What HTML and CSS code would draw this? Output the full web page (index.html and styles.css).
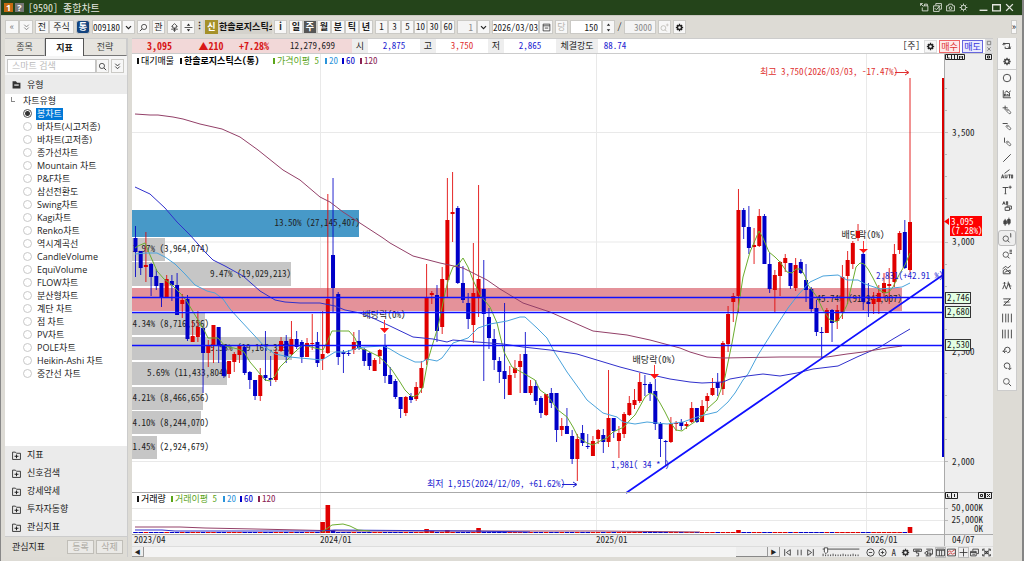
FILE: index.html
```html
<!DOCTYPE html>
<html lang="ko">
<head>
<meta charset="utf-8">
<title>[9590] 종합차트</title>
<link rel="stylesheet" href="styles.css">
</head>
<body>
<svg class="defs" aria-hidden="true">
  <symbol id="gear" viewBox="0 0 16 16"><path d="M8 1.5v13M1.5 8h13M3.4 3.4l9.2 9.2M12.6 3.4l-9.2 9.2" fill="none" stroke="currentColor" stroke-width="2.4"/><circle cx="8" cy="8" r="3.6" fill="#f7f7f7" stroke="currentColor" stroke-width="2.4"/></symbol>
  <symbol id="search" viewBox="0 0 16 16"><circle cx="7" cy="7" r="4.6" fill="none" stroke="currentColor" stroke-width="1.3"/><path d="M10.5 10.5l4 4" stroke="currentColor" stroke-width="1.5"/></symbol>
  <symbol id="search-mark" viewBox="0 0 16 16"><circle cx="6" cy="9" r="4.300" fill="none" stroke="currentColor" stroke-width="1.3"/><path d="M9 12l3 3" stroke="currentColor" stroke-width="1.5"/></symbol>
  <symbol id="down2" viewBox="0 0 16 16"><path d="M4 3l4 4 4-4M4 8l4 4 4-4" fill="none" stroke="currentColor" stroke-width="1.5"/></symbol>
  <symbol id="down" viewBox="0 0 16 16"><path d="M3.500 5.500l4.500 4.500 4.500-4.500" fill="none" stroke="currentColor" stroke-width="2"/></symbol>
  <symbol id="plusbox" viewBox="0 0 16 16"><path d="M1 2h5l2 2h7v11H1z" fill="none" stroke="currentColor" stroke-width="1.5"/><path d="M8 6v7M4.500 9.500h7" stroke="currentColor" stroke-width="1.8"/></symbol>
  <symbol id="pen" viewBox="0 0 16 16"><path d="M7 7.500l2-1 5 5-.5 2-2 .5-5-5zM8.500 9.500l2-2" fill="none" stroke="currentColor" stroke-width="1.200"/></symbol>
</svg>
<div class="window">
  <header class="title">
    <span class="badge orange">1</span><span class="badge gray">?</span>
    <h1>[9590] 종합차트</h1>
    <div class="wincontrols">
      <button aria-label="내보내기"><svg viewBox="0 0 16 16"><path d="M6 5h8v9H4V8M1 1l5 5M1 1h4M1 1v4M8 5V2h5v3" /></svg></button>
      <button aria-label="복사"><svg viewBox="0 0 16 16"><path d="M5 4V1h10v10h-3M1 5h10v10H1zM3 9l3 3 7-8"/></svg></button>
      <button aria-label="화면 캡처"><svg viewBox="0 0 16 16"><path d="M1 5h3l1-3h6l1 3h3v9H1z"/><circle cx="8" cy="9" r="2.500"/></svg></button>
      <button aria-label="환경설정"><svg viewBox="0 0 16 16"><circle cx="8" cy="8" r="4"/><path d="M8 1v3M8 12v3M1 8h3M12 8h3M3 3l2 2M11 11l2 2M13 3l-2 2M5 11l-2 2"/></svg></button>
      <button class="wide" aria-label="최소화"><svg viewBox="0 0 16 16"><path d="M1 13h14" class="thick"/></svg></button>
      <button aria-label="최대화"><svg viewBox="0 0 16 16"><path d="M1 3h14v11H1z" class="thick"/></svg></button>
      <button aria-label="닫기"><svg viewBox="0 0 16 16"><path d="M2 2l12 12M14 2L2 14" class="thick"/></svg></button>
    </div>
  </header>

  <div class="toolbar">
    <div class="group"><button class="b w14 gray-t">«</button><button class="b w14 gray-t" aria-label="아래로"><svg class="i"><use href="#down2"/></svg></button></div>
    <div class="group"><button class="b w14">전</button><button class="b w25">주식</button></div>
    <button class="b w14 unified">통</button>
    <div class="group"><input class="w30" aria-label="종목코드" value="009180"><button class="b" aria-label="종목 목록"><svg class="i"><use href="#down"/></svg></button></div>
    <button class="b" aria-label="종목 검색"><svg class="i flip"><use href="#search"/></svg></button>
    <button class="b">관</button>
    <div class="group"><button class="b w14" aria-label="순환"><svg class="i line" viewBox="0 0 16 16"><path d="M8 1L3 6h2v3h6V6h2zM2 11h12M8 9v6M6 13l2 2 2-2"/></svg></button><button class="b w14" aria-label="이동"><svg class="i" viewBox="0 0 16 16"><path d="M8 1l3 4H5zM8 15l3-4H5zM1 7h14v1.500H1z" fill="currentColor"/></svg></button><span class="dots">⋮</span></div>
    <div class="stock"><span class="new">신</span><strong>한솔로지스틱스</strong></div>
    <button class="b bold">i</button>
    <div class="group period"><button class="b w14">일</button><button class="b w14 on">주</button><button class="b w14">월</button><button class="b w14">분</button><button class="b w14">틱</button><button class="b w14">년</button></div>
    <div class="group"><button class="b">1</button><button class="b">3</button><button class="b">5</button><button class="b">10</button><button class="b w14">30</button><button class="b w14">60</button></div>
    <div class="group"><input class="w20 off" aria-label="주기" value="1"><button class="b" aria-label="주기 목록"><svg class="i"><use href="#down"/></svg></button></div>
    <div class="group"><input class="w47" aria-label="날짜" value="2026/03/03"><button class="b w14" aria-label="달력"><svg class="i line" viewBox="0 0 16 16"><path d="M2 2h12v12H2zM2 5h12M5 9h6"/></svg></button></div>
    <button class="b dim">당</button>
    <div class="group"><input class="w32" aria-label="표시 개수" value="150"><button class="b" aria-label="개수 조절"><svg class="i" viewBox="0 0 16 16"><path d="M8 1l3 4H5zM8 15l3-4H5z" fill="currentColor"/></svg></button></div>
    <span class="slash">/</span>
    <input class="w32 off" aria-label="전체 개수" value="3000">
    <button class="b dim" aria-label="확대"><svg class="i" viewBox="0 0 16 16"><use href="#search-mark"/><path d="M13 1v5M10.500 3.500h5" stroke="currentColor"/></svg></button>
    <button class="b" aria-label="차트 설정"><svg class="i"><use href="#gear"/></svg></button>
    <button class="b more" aria-label="더보기">»</button>
  </div>

  <div class="body">
    <aside class="side">
      <nav class="tabs"><button>종목</button><button class="on">지표</button><button>전략</button></nav>
      <div class="find"><input type="text" placeholder="스마트 검색" aria-label="스마트 검색"><button class="b" aria-label="검색"><svg class="i"><use href="#search"/></svg></button><button class="b gap" aria-label="펼치기"><svg class="i"><use href="#down2"/></svg></button></div>
      <h2><svg class="i" viewBox="0 0 16 16"><path d="M1 2h6l2 3h6v10H1z" fill="#333"/><path d="M4 9h8" stroke="#fff" stroke-width="2"/></svg>유형</h2>
      <fieldset class="tree">
        <legend>차트유형</legend>
        <label><input type="radio" name="t" checked><span>봉차트</span></label>
        <label><input type="radio" name="t"><span>바차트(시고저종)</span></label>
        <label><input type="radio" name="t"><span>바차트(고저종)</span></label>
        <label><input type="radio" name="t"><span>종가선차트</span></label>
        <label><input type="radio" name="t"><span>Mountain 차트</span></label>
        <label><input type="radio" name="t"><span>P&amp;F차트</span></label>
        <label><input type="radio" name="t"><span>삼선전환도</span></label>
        <label><input type="radio" name="t"><span>Swing차트</span></label>
        <label><input type="radio" name="t"><span>Kagi차트</span></label>
        <label><input type="radio" name="t"><span>Renko차트</span></label>
        <label><input type="radio" name="t"><span>역시계곡선</span></label>
        <label><input type="radio" name="t"><span>CandleVolume</span></label>
        <label><input type="radio" name="t"><span>EquiVolume</span></label>
        <label><input type="radio" name="t"><span>FLOW차트</span></label>
        <label><input type="radio" name="t"><span>분산형차트</span></label>
        <label><input type="radio" name="t"><span>계단 차트</span></label>
        <label><input type="radio" name="t"><span>점 차트</span></label>
        <label><input type="radio" name="t"><span>PV차트</span></label>
        <label><input type="radio" name="t"><span>POLE차트</span></label>
        <label><input type="radio" name="t"><span>Heikin-Ashi 차트</span></label>
        <label><input type="radio" name="t"><span>중간선 차트</span></label>
      </fieldset>
      <div class="folders">
        <button><svg class="i"><use href="#plusbox"/></svg>지표</button>
        <button><svg class="i"><use href="#plusbox"/></svg>신호검색</button>
        <button><svg class="i"><use href="#plusbox"/></svg>강세약세</button>
        <button><svg class="i"><use href="#plusbox"/></svg>투자자동향</button>
        <button><svg class="i"><use href="#plusbox"/></svg>관심지표</button>
      </div>
      <footer><span>관심지표</span><button disabled>등록</button><button disabled>삭제</button></footer>
    </aside>

    <main class="chart">
      <div class="quote">
        <div class="now"><b>3,095</b><b>▲210</b><b>+7.28%</b><span>12,279,699</span></div>
        <span class="k">시</span><span class="v">2,875</span>
        <span class="k">고</span><span class="v up">3,750</span>
        <span class="k">저</span><span class="v">2,865</span>
        <span class="k strength">체결강도</span><span class="v rate">88.74</span>
        <div class="orders"><span>[주]</span><button class="b" aria-label="주문 설정"><svg class="i"><use href="#gear"/></svg></button><button class="buy">매수</button><button class="sell">매도</button><button class="mini" aria-label="창 조절"><svg viewBox="0 0 6 14"><path d="M1 1.500h4v4H1zM1 8.500l4 4M5 8.500l-4 4" fill="none" stroke="#777"/></svg></button></div>
      </div>
      <svg class="plot" viewBox="132 54 861 492" role="img" aria-label="한솔로지스틱스 주봉 차트">
        <rect x="944" y="54" width="49" height="492" fill="#eee"/>
        <rect x="132" y="534" width="812" height="12" fill="#eee"/>
        <g class="grid"><path d="M132 132.500H944M132 242H944M132 351.500H944M132 461.500H944M320.500 54V534M596.500 54V534M866.500 54V534M132 508.500H944M132 520.500H944"/></g>
        <g id="profile"></g>
        <g class="num" text-anchor="end">
          <text x="360" y="226">13.50% (27,145,407)</text><text x="209" y="252">1.97% (3,964,074)</text><text x="291" y="277">9.47% (19,029,213)</text>
          <text x="902" y="302">45.74% (91,947,007)</text><text x="209" y="327">4.34% (8,716,556)</text><text x="291" y="351">9.53% (19,167,333)</text>
          <text x="228" y="376">5.69% (11,433,804)</text><text x="209" y="401">4.21% (8,466,656)</text><text x="209" y="426">4.10% (8,244,070)</text><text x="209" y="450">1.45% (2,924,679)</text>
        </g>
        <g class="num" text-anchor="middle"><text x="384" y="318">배당락(0%)</text><text x="654" y="363">배당락(0%)</text><text x="863" y="238">배당락(0%)</text></g>
        <g id="candles"></g>
        <g class="ma">
          <polyline stroke="#6cad2f" points="135,248 138,246 145,243 150,255 157,271 164,279 172,285 180,293 186,300 192,310 198,320 204,330 208,338 218,338 225,346 238,349 244,352 250,362 256,369 265,380 270,381 275,376 280,367 290,357 297,350 303,345 311,347 323,350 328,340 332,331 349,331 355,338 359,348 366,350 378,356 385,362 392,370 400,382 405,390 412,397 418,395 423,387 428,360 433,343 438,327 445,293 449,277 453,267 458,265 463,258 468,267 473,280 480,295 490,307 497,323 504,352 512,367 523,373 535,380 540,390 547,395 552,402 558,410 567,417 573,427 578,437 587,443 593,445 600,441 607,438 613,432 624,427 630,420 635,415 639,408 645,397 650,393 655,395 660,403 665,412 670,422 676,430 682,431 687,427 702,417 708,408 717,400 722,387 725,377 732,343 738,310 743,277 750,252 759,231 763,238 769,252 775,257 780,262 787,272 792,273 796,269 801,269 805,276 808,285 817,297 823,310 830,320 837,322 842,315 847,305 851,288 856,267 860,263 864,264 868,269 873,278 879,290 885,293 889,292 893,287 900,273 905,265 910,253"/>
          <polyline stroke="#4aa3dc" points="135,254 146,253 157,253 165,257 175,264 185,274 195,285 207,291 215,293 223,299 230,309 240,320 253,334 265,347 275,354 290,357 300,358 322,360 335,352 345,352 358,348 365,347 383,346 390,349 400,355 415,362 422,362 427,359 437,361 442,358 448,350 453,343 468,338 478,328 490,324 507,321 520,317 525,317 537,328 547,338 555,353 567,372 580,390 587,400 603,413 617,417 623,422 635,424 647,422 667,424 683,422 700,416 717,412 728,402 735,393 743,380 748,374 758,355 775,328 788,308 798,295 810,282 823,276 838,275 847,280 858,280 865,284 880,289 893,288 902,287 910,283"/>
          <polyline stroke="#3030cc" points="135,187 150,194 165,208 177,222 190,235 205,252 213,260 225,266 243,276 260,291 275,300 285,302 300,303 320,303 335,306 345,310 360,313 375,319 390,326 413,337 433,339 447,342 453,340 477,342 503,344 523,347 550,350 577,354 620,367 643,373 670,379 690,382 702,383 723,382 730,379 747,376 763,374 780,376 797,373 813,369 838,366 857,357 880,347 893,339 910,329"/>
          <polyline stroke="#934068" points="135,114 150,115 158,115 173,117 183,119 200,124 222,129 240,137 258,150 283,170 300,180 320,197 330,202 343,212 363,225 383,238 390,243 413,256 440,263 463,268 487,280 500,289 523,303 550,312 577,324 593,331 610,333 627,335 650,340 680,348 690,352 707,357 723,358 780,357 827,357 847,354 863,352 887,348 902,346"/>
          <polyline stroke="#934068" points="135,527 180,527 205,528 255,529 300,530 345,531 600,531 700,532"/>
          <polyline stroke="#3030cc" points="135,530 162,530 175,531 320,531 335,530 470,531 530,532"/>
          <polyline stroke="#6cad2f" points="322,532 332,525 343,524 350,526 358,530 370,531"/>
        </g>
        <g class="price-lines"><path d="M132 297.500H943M132 312.500H943M132 345.500H943M626 493L943 275"/></g>
        <path d="M943 78V269" stroke="#d90000" stroke-width="2"/><path d="M943 269V457" stroke="#0000c8" stroke-width="2"/>
        <g class="down-marks"><path d="M384.500 320v9M654.500 365v10M863.500 241v9"/><path class="head" d="M380 328h9l-4.500 5zM650 374h9l-4.500 5zM859 249h9l-4.500 4z"/></g>
        <g class="note"><text x="760" y="75" class="red">최고 3,750(2026/03/03, -17.47%)</text><text x="427" y="487">최저 1,915(2024/12/09, +61.62%)</text><text x="611" y="468">1,981( 34 * )</text><text x="876" y="279">2,831(+42.91 %)</text>
        <path class="red" d="M895 72.500H908M905 70l4 2.500-4 2.500"/><path d="M562 484.500H576M573 482l4 2.500-4 2.500"/></g>
        <g class="legend">
          <path d="M138 58v6" stroke="#111"/><text x="141" y="64">대기매물</text><path d="M181 58v6" stroke="#111"/><text x="184" y="64" class="strong">한솔로지스틱스(통)</text>
          <path d="M274 58v6" stroke="#5ba51a"/><text x="277" y="64" fill="#5ba51a">가격이평 5</text><path d="M326 58v6" stroke="#2a94db"/><text x="329" y="64" fill="#2a94db">20</text><path d="M343 58v6" stroke="#0000c8"/><text x="346" y="64" fill="#0000c8">60</text><path d="M361 58v6" stroke="#8b2252"/><text x="364" y="64" fill="#8b2252">120</text>
          <path d="M138 496v6" stroke="#111"/><text x="141" y="502">거래량</text><path d="M172 496v6" stroke="#5ba51a"/><text x="175" y="502" fill="#5ba51a">거래이평 5</text><path d="M224 496v6" stroke="#2a94db"/><text x="227" y="502" fill="#2a94db">20</text><path d="M241 496v6" stroke="#0000c8"/><text x="244" y="502" fill="#0000c8">60</text><path d="M259 496v6" stroke="#8b2252"/><text x="262" y="502" fill="#8b2252">120</text>
        </g>
        <path class="frame" d="M132 492.500H993M132 534.500H993M944.500 54V546"/>
        <path class="ticks" d="M945 88.500h2M945 110.500h2M945 132.500h3M945 154.500h2M945 176.500h2M945 198.500h2M945 242.500h3M945 264.500h2M945 286.500h2M945 329.500h2M945 373.500h2M945 395.500h2M945 417.500h2M945 439.500h2M945 461.500h3M945 508.500h3M945 520.500h3"/>
        <g class="axis">
          <text x="952" y="136">3,500</text><text x="952" y="245">3,000</text><text x="952" y="355">2,500</text><text x="952" y="465">2,000</text>
          <g text-anchor="end"><text x="983" y="511">50,000K</text><text x="983" y="523">25,000K</text><text x="983" y="532">0K</text></g>
          <text x="134" y="543">2023/04</text><text x="320" y="543">2024/01</text><text x="596" y="543">2025/01</text><text x="866" y="543">2026/01</text><text x="952" y="543">04/07</text>
        </g>
        <path d="M950 216h32v20h-32zM944 221.500l5-3.500v7z" fill="#f00"/><g class="price"><text x="951" y="225">3,095</text><text x="951" y="234">(7.28%)</text></g>
        <g class="tag"><rect x="945.500" y="292.500" width="25" height="11"/><rect x="945.500" y="306.500" width="25" height="11"/><rect x="945.500" y="339.500" width="25" height="11"/></g>
        <g class="axis"><text x="947" y="301">2,746</text><text x="947" y="315">2,680</text><text x="947" y="348">2,530</text></g>
        <g class="panebox"><path d="M945.500 54.500h6v5h-6zM951.500 54.500h6v5h-6zM957.500 54.500h7v5h-7zM985.500 54.500h6v5h-6zM987.500 56h2v2h-2zM947.500 55v3h2M954.500 55v4M959.500 59v-3l1.500 1.500 1.500-1.500v3M945.500 492.500h6v6h-6zM951.500 492.500h6v6h-6zM978.500 492.500h6v6h-6zM985.500 492.500h6v6h-6zM980.500 494.500h2v2h-2zM987 494l3 3M990 494l-3 3M947.500 494v3h2M954.500 494v3"/></g>
      </svg>
      <div class="scroll">
        <button class="arrow" aria-label="왼쪽">◀</button><div class="track"><div class="thumb"></div></div><button class="arrow" aria-label="오른쪽">▶</button>
        <div class="play">
          <button aria-label="처음"><svg viewBox="0 0 16 16"><path d="M3 2v12M13 3L6 8l7 5z"/></svg></button>
          <button aria-label="일시정지"><svg viewBox="0 0 16 16"><path d="M5 3v10M11 3v10" class="thick"/></svg></button>
          <button aria-label="끝"><svg viewBox="0 0 16 16"><path d="M13 2v12M3 3l7 5-7 5z"/></svg></button>
          <svg class="slider" viewBox="0 0 46 12"><path d="M1 2.500h44M1.500 8v3M4.500 9v2M7.500 9v2M10.500 9v2M13.500 8v3M16.500 9v2M19.500 9v2M22.500 9v2M25.500 8v3M28.500 9v2M31.500 9v2M34.500 9v2M37.500 8v3M40.500 9v2M43.500 9v2"/><path d="M3 1h4v5L5 8 3 6z" fill="#fff"/></svg>
          <button aria-label="축소"><svg viewBox="0 0 16 16"><circle cx="8" cy="8" r="6.500"/><path d="M5 8h6"/></svg></button>
          <button aria-label="확대"><svg viewBox="0 0 16 16"><circle cx="8" cy="8" r="6.500"/><path d="M5 8h6M8 5v6"/></svg></button>
          <button>A</button>
          <button aria-label="설정"><svg viewBox="0 0 16 16"><use href="#gear"/></svg></button>
          <button aria-label="도구"><svg viewBox="0 0 16 16"><path d="M1 2h14v4H1zM6 6v3h4v5H6M4 4h8"/></svg></button>
          <button aria-label="이전 화면"><svg viewBox="0 0 16 16"><path d="M4 2h11v9H8M7 5h5M1 9l5-4v8zM6 9h6v5H3"/></svg></button>
          <button class="sel" aria-label="분할"><svg viewBox="0 0 16 16"><path d="M1 2h14v12H1zM1 4h14M6 4v10M10 4v10"/></svg></button>
          <button aria-label="지표"><svg viewBox="0 0 16 16"><path d="M1 2h14v12H1z"/><path d="M2 7l3-2 3 2 6-4M2 12l4-3 4 2 4-2" stroke="#c33"/></svg></button>
          <button class="sel" aria-label="십자선"><svg viewBox="0 0 16 16"><path d="M8 1v14M1 8h14"/></svg></button>
          <button aria-label="창"><svg viewBox="0 0 16 16"><path d="M5 5V2h10v8h-3M1 6h10v8H1zM1 8h10M4 11h5" class="thick"/></svg></button>
          <button aria-label="전체화면"><svg viewBox="0 0 16 16"><path d="M1 5V2h4M11 2h4v3M1 11v3h4M11 14h4v-3M2 3l12 10M14 3L2 13M5 6h6v4H5z"/></svg></button>
        </div>
      </div>
    </main>

    <aside class="tools" aria-label="그리기 도구">
      <button aria-label="새로고침"><svg viewBox="0 0 16 16"><path d="M3 7V4h9v7M14 12H5V9M1 6l2-3 2 3M10 9l2 3 2-3"/></svg></button>
      <button aria-label="설정" class="last"><svg viewBox="0 0 16 16"><use href="#gear"/></svg></button>
      <button aria-label="원"><svg viewBox="0 0 16 16"><circle cx="8" cy="8" r="6"/></svg></button>
      <button aria-label="차트"><svg viewBox="0 0 16 16"><path d="M2 2v12h12M4 12V8h2v4M8 12V9h2v3M12 12V6M4 6l4-3 2 3 4-3"/></svg></button>
      <button aria-label="십자 그리기"><svg viewBox="0 0 16 16"><path d="M5 1v7M1 4.500h8"/><use href="#pen"/></svg></button>
      <button aria-label="수평선"><svg viewBox="0 0 16 16"><path d="M1 4h8"/><use href="#pen"/></svg></button>
      <button aria-label="수직선"><svg viewBox="0 0 16 16"><path d="M4 1v8"/><use href="#pen"/></svg></button>
      <button aria-label="추세선"><svg viewBox="0 0 16 16"><path d="M2 14L14 2"/></svg></button>
      <button aria-label="자동 추세선" class="broad"><svg viewBox="0 0 20 16"><path d="M6 7l8-6M1 15l2-6 2 6M2 13h2M7 9v5h3V9M12 9.500h4M14 9v6M17 9.500h2v5h-2z"/></svg></button>
      <button aria-label="문자"><svg viewBox="0 0 16 16"><path d="M1 4h9M5.500 4v10M4 14h3M13 1v5M10.500 3.500h5"/></svg></button>
      <button aria-label="문자 상자"><svg viewBox="0 0 16 16"><path d="M1 6l2-5 2 5M2 4h2M7 1v5h2V1zM7 3h2M5 10h7v5H5zM8 10V8h7v5h-3"/></svg></button>
      <button aria-label="봉"><svg viewBox="0 0 16 16"><path d="M5 3v11M11 1v12" /><path class="solid" d="M3 6h4v5H3zM9 4h4v6H9z"/></svg></button>
      <button aria-label="정보 보기" class="sel"><svg viewBox="0 0 16 16"><use href="#search-mark"/><path d="M14 1v6M13 1h1"/></svg></button>
      <button aria-label="목록 보기"><svg viewBox="0 0 16 16"><use href="#search-mark"/><path d="M12 2h4M12 4.500h4M12 7h4"/></svg></button>
      <button aria-label="패턴"><svg viewBox="0 0 16 16"><path d="M1 6l5-4 3 3 5-4M2 14V9l4-3 3 4 4-2v6zM4 12l5-3 4 4"/></svg></button>
      <button aria-label="파동"><svg viewBox="0 0 16 16"><path d="M1 13l3-7 3 7 3-9 4 9M4 6V2M2 4l2-2 2 2M10 5V1M12 4v4h3"/></svg></button>
      <button aria-label="되돌림"><svg viewBox="0 0 16 16"><path d="M2 3h12M3 8h9M2 13h12M13 3L3 13"/></svg></button>
      <button aria-label="시간대"><svg viewBox="0 0 16 16"><path d="M1 1v14M6 1v14M10 1v14M15 1v14"/></svg></button>
      <button aria-label="등간격"><svg viewBox="0 0 16 16"><path d="M1 1v14M5 1v14M10 1v14M15 1v14"/></svg></button>
      <button aria-label="되돌리기"><svg viewBox="0 0 16 16"><path d="M4 8a4.500 4.500 0 1 1 4.500 4.500M1 10h7M5 7l-3 3 3 3"/></svg></button>
      <button aria-label="다시 실행"><svg viewBox="0 0 16 16"><path d="M8 12a4.500 4.500 0 1 1 4.500-4.500V13M9 11l3 3 3-3"/></svg></button>
      <button aria-label="검색"><svg viewBox="0 0 16 16"><use href="#search"/></svg></button>
    </aside>
  </div>
</div>
<script src="chart.js"></script>
</body>
</html>
```
FILE: styles.css
```css
* { box-sizing: border-box; }
body { margin: 0; background: #dddbd5; color: #222; font: 9px/12px "Open Sans", "Noto Sans CJK KR", sans-serif; }
button, input { font: inherit; color: inherit; margin: 0; padding: 0; border-radius: 0; }
button { background: none; border: 0; }
.defs { position: absolute; width: 0; height: 0; }
.window { min-height: 100vh; display: flex; flex-direction: column; border-left: 1px solid #888; border-right: 2px solid #858585; }
.title { height: 15px; background: #24441a; color: #e3e6df; display: flex; align-items: center; gap: 2px; padding: 0 8px 0 3px; }
.title h1 { font-size: 10px; font-weight: 400; margin: 0 0 0 2px; font-family: "Noto Sans Mono CJK KR", "Noto Sans CJK KR", sans-serif; }
.badge { width: 9px; height: 9px; line-height: 9px; text-align: center; font-weight: 700; color: #fff; }
.orange { background: #c56a10; }
.badge.gray { background: #777; }
.wincontrols { margin-left: auto; display: flex; gap: 4px; }
.wincontrols button { width: 9px; height: 9px; }
.wincontrols .wide { margin-left: 7px; }
.wincontrols svg, .tools svg, .play svg { display: block; width: 100%; height: 100%; fill: none; stroke: currentColor; stroke-width: 1.5; }
.wincontrols .thick { stroke-width: 2.5; }

.toolbar { height: 23px; display: flex; align-items: center; gap: 2px; padding-left: 4px; border-top: 1px solid #c9c7c1; font-family: "Noto Sans Mono CJK KR", "Noto Sans CJK KR", sans-serif; }
.group { display: flex; }
.b { width: 13px; height: 14px; flex: none; display: flex; align-items: center; justify-content: center; background: #f7f7f7; border: 1px solid #cbcac6; }
.i { width: 9px; height: 9px; flex: none; display: block; }
.i.line { fill: none; stroke: currentColor; stroke-width: 1.3; }
.flip { transform: scaleX(-1); }
.gray-t { color: #777; }
.w14 { width: 14px; }
.w25 { width: 25px; }
.unified { background: #13447f; color: #fff; border-radius: 3px; font-weight: 700; }
.toolbar input { height: 14px; border: 1px solid #cbcac6; background: #fff; min-width: 0; }
.toolbar .w30 { width: 30px; }
.toolbar .w20 { width: 20px; }
.toolbar .w47 { width: 47px; }
.toolbar .w32 { width: 32px; text-align: right; padding-right: 3px; }
.toolbar .off { color: #888; background: #f4f4f4; text-align: right; padding-right: 3px; }
.dots { width: 6px; text-align: center; font-weight: 700; }
.stock { width: 69px; height: 14px; display: flex; align-items: center; gap: 1px; overflow: hidden; white-space: nowrap; padding-left: 2px; background: #d4d2cc; }
.stock strong { color: #111; }
.new { width: 13px; height: 14px; flex: none; line-height: 14px; text-align: center; background: #a59129; color: #fff; font-weight: 700; }
.bold, .period { font-weight: 700; }
.on.b { background: #555; color: #fff; }
.dim { color: #b5b3ad; }
.slash { width: 5px; text-align: center; }
.more { width: 6px; margin-left: auto; margin-right: 5px; }

.body { flex: 1; display: flex; gap: 4px; padding: 0 5px 4px 4px; align-items: stretch; }
.side { width: 123px; flex: none; display: flex; flex-direction: column; background: #fff; border-right: 1px solid #ccc; }
.tabs { display: grid; grid-template-columns: 40px 39px 1fr; height: 18px; background: #e6e4df; font-size: 9px; }
.tabs button { border: 1px solid #ccc; border-bottom-color: #777; border-left: 0; color: #444; }
.tabs .on { background: #fff; border: 1px solid #555; border-bottom: 0; font-weight: 700; color: #222; }
.find { display: flex; background: #f5f5f5; padding: 3px 3px 2px 2px; height: 19px; }
.find input { flex: 1; min-width: 0; border: 1px solid #c5c5c5; background: #fff; padding-left: 4px; }
.find ::placeholder { color: #bbb; }
.gap { margin-left: 2px; }
.side h2 { margin: 0; height: 19px; background: #ebebeb; font-size: 9px; font-weight: 400; display: flex; align-items: center; gap: 6px; padding-left: 7px; }
.tree { border: 0; margin: 0; padding: 0 0 0 22px; flex: 1; min-width: 0; }
.tree legend { padding: 0; line-height: 13px; margin-left: -4px; position: relative; }
.tree legend::before { content: ""; position: absolute; left: -12px; top: 3px; width: 3px; height: 4px; border: solid #888; border-width: 0 0 1px 1px; }
.tree label { display: flex; height: 13px; line-height: 12px; gap: 4px; align-items: center; white-space: nowrap; margin-left: -4px; }
.tree input { appearance: none; width: 9px; height: 9px; border: 1px solid #c8c8c8; border-radius: 50%; background: #fff; }
.tree input:checked { border-color: #555; background: radial-gradient(circle, #333 2px, #fff 3px); }
.tree span { padding: 0 1px; }
.tree :checked + span { background: #0078d7; color: #fff; }
.folders { background: #ebebeb; display: grid; grid-auto-rows: 18px; }
.folders button { display: flex; align-items: center; gap: 6px; padding-left: 7px; }
.side footer { height: 21px; display: flex; align-items: center; gap: 2px; background: #dedcd6; padding: 0 4px 0 7px; border-top: 1px solid #ccc; }
.side footer span { margin-right: auto; }
.side footer button { width: 27px; height: 14px; border: 1px solid #c0beb8; color: #aaa8a1; background: #eae9e6; }

.chart { flex: 1; min-width: 0; background: #fff; font-family: "Noto Sans Mono CJK KR", "Noto Sans CJK KR", sans-serif; }
.quote { height: 16px; display: flex; align-items: center; border: solid #ccc; border-width: 1px 0; line-height: 14px; }
.now { width: 220px; background: #f2d8d8; display: grid; grid-template-columns: 55px 48px 38px 1fr; text-align: center; }
.now b { color: #d81818; font-size: 10px; }
.k { width: 16px; text-align: center; background: #eee; }
.v { width: 52px; text-align: center; color: #2222d0; }
.up { color: #e03030; }
.k.strength { width: 42px; }
.v.rate { width: 34px; }
.orders { margin-left: auto; display: flex; align-items: center; gap: 2px; }
.orders .b { border-color: #ddd; height: 13px; margin-left: 2px; }
.buy, .sell { width: 21px; height: 13px; line-height: 11px; }
.buy { border: 1px solid #e66; color: #d33; background: #fdeaea; }
.sell { border: 1px solid #66d; color: #33d; background: #eaeafd; }
.mini { width: 8px; height: 14px; background: #ddd; }
.mini svg { width: 6px; height: 12px; display: block; margin: auto; }

.plot { display: block; width: 100%; height: auto; font-size: 9px; }
.plot path, .plot polyline { fill: none; }
.plot path[fill] { fill: #f00; }
.grid path { stroke: #e9e9e9; }
.num, .axis { fill: #222; }
.price { fill: #fff; }
.legend path { stroke-width: 2; }
.strong { font-weight: 700; }
.price-lines { stroke: #1010ff; stroke-width: 1.7; }
.down-marks { stroke: #f33; }
.plot .head { fill: #f11; stroke: none; }
.note text { fill: #2222d0; white-space: pre; }
.note text.red { fill: #e03030; }
.note path { stroke: #2222d0; }
.note path.red { stroke: #e03030; }
.frame { stroke: #aaa; }
.ticks { stroke: #bbb; }
.tag rect { fill: #e3ffe3; stroke: #333; }
.panebox { stroke: #222; }
.bar { fill: #c6c6c6; }
.bar.max { fill: #4799c8; }
.bar.now-bar { fill: #e4929a; }
.rise { fill: #e00000; }
.fall { fill: #0000c8; }
.wick { opacity: 0.85; }

.scroll { display: flex; height: 11px; background: #f4f4f4; border-top: 1px solid #ddd; }
.arrow { width: 12px; font-size: 6px; line-height: 9px; border: solid #999; border-width: 0 1px 1px 0; background: #eee; }
.track { flex: 1; display: flex; justify-content: flex-end; }
.thumb { width: 32px; background: #eee; border-bottom: 1px solid #888; border-right: 1px solid #999; }
.play { width: 213px; display: flex; align-items: center; justify-content: space-between; padding: 0 2px 0 3px; background: #eee; color: #333; }
.play button { width: 9px; height: 9px; line-height: 9px; }
.play .slider { width: 46px; height: 10px; stroke-width: 1; }
.sel { outline: 1px solid #bbb; }

.tools { width: 20px; flex: none; align-self: flex-start; background: #f8f8f8; border: solid #ccc; border-width: 0 1px 1px; display: grid; grid-auto-rows: 16px; justify-items: center; align-items: center; color: #444; }
.tools button { width: 18px; height: 16px; padding: 3px 4px; }
.tools .broad { padding: 3px 2px; }
.tools .last { border-bottom: 1px solid #ccc; }
.tools .sel { background: #eee; outline-offset: -1px; border-radius: 3px; }
.tools .solid { fill: currentColor; }
```
FILE: chart.js
```js
// Volume profile: right edge, top, height, class
const profile = [
  [359, 210, 27, "max"], [165, 238, 23, ""], [291, 262, 24, ""], [902, 288, 23, "now-bar"],
  [205, 313, 22, ""], [292, 337, 23, ""], [227, 362, 23, ""], [203, 387, 23, ""],
  [201, 411, 23, ""], [157, 436, 23, ""]
];
// Weekly candles: direction, high, low, body top, body bottom
const weeks = `B226,277,238,252 B251,275,251,268 R232,282,265,267 B263,296,264,277 B269,290,276,286 B283,307,283,297 R275,297,279,297 B275,301,281,285 B273,315,285,315 R294,318,300,304
B295,341,299,339 R321,342,336,342 R311,342,327,337 B327,393,328,353 R340,367,346,353 R325,363,325,345 B327,363,327,346 B345,378,345,376 R361,378,361,374 R352,372,354,362
R345,363,346,355 B346,375,347,373 B371,389,372,380 B380,400,380,396 R368,401,375,396 B331,381,375,378 B356,386,378,380 R349,382,352,380 R337,352,341,351 B335,363,341,357
R321,355,339,354 B331,349,339,347 B340,363,342,357 R338,357,343,357 R314,350,343,344 B332,367,342,363 R311,370,354,359 R194,354,299,353 B178,312,255,288 B292,365,294,357
B350,373,352,354 B350,356,353,354 R332,354,342,350 B330,350,341,348 B348,366,349,361 B352,370,353,366 R358,371,360,371 R349,364,350,356 B334,383,345,376 B367,384,375,384
B379,399,381,397 B397,418,397,409 R396,416,397,413 B393,403,396,400 R382,401,387,399 R361,393,368,388 R264,365,298,360 R291,304,293,295 B285,342,295,331 R267,334,279,327
R178,297,220,280 R172,242,212,214 B206,284,208,283 B266,303,283,300 B293,329,303,319 R243,343,293,325 R185,317,279,297 B260,381,289,314 B308,349,317,338 B329,370,339,360
B357,383,361,372 B303,399,371,379 R366,395,375,395 R360,378,368,373 R354,393,361,367 B332,393,354,393 R380,395,386,393 B380,405,386,401 B396,418,398,413 R394,416,394,415
B388,408,393,403 B393,442,393,430 R418,436,426,430 B408,434,426,434 B430,464,436,459 R434,481,439,459 B425,446,433,443 B434,449,446,447 R436,456,441,456 R429,444,430,439
B429,453,435,442 R370,447,418,442 B418,438,418,431 R426,458,433,441 R412,438,414,434 R396,416,403,415 R389,409,400,405 R373,403,382,401 B375,396,384,385 B382,401,384,393
B379,430,391,424 B422,457,424,439 B440,465,441,442 R417,443,424,442 R421,431,423,424 B419,430,422,426 R422,429,424,426 R402,423,408,422 B408,423,408,422 R400,422,406,422
R393,411,396,401 R378,396,388,395 B373,396,382,388 R341,395,343,389 R306,352,314,344 R293,322,296,302 R189,312,210,296 B208,239,210,227 B206,254,227,248 R228,264,245,247
R209,247,216,246 B214,264,216,264 B253,293,264,289 R270,312,275,290 R261,296,262,276 R254,272,258,263 B263,289,263,286 R258,291,265,288 B259,274,262,273 B264,302,280,290
B287,312,289,309 B300,336,308,332 B327,358,332,333 R308,333,310,333 B309,342,310,323 R305,329,310,321 R265,319,277,312 R251,304,260,276 R241,269,243,264 R224,241,231,238
B250,310,254,302 B283,317,302,304 R292,314,299,304 R285,314,293,302 R273,297,283,293 R268,304,284,286 R244,287,254,282 R231,254,233,250 B220,269,232,268 R78,272,222,270`.split(/\s+/);
// Weeks whose traded volume stands out, by index
const volumes = { 36: 11, 37: 28, 38: 3, 56: 4, 57: 2, 60: 3, 66: 5, 116: 3, 149: 6 };

function rect(parent, x, y, width, height, cls) {
  const el = document.createElementNS("http://www.w3.org/2000/svg", "rect");
  Object.entries({ x, y, width, height, class: cls }).forEach(([k, v]) => el.setAttribute(k, v));
  parent.append(el);
}

const profileLayer = document.getElementById("profile");
profile.forEach(([right, top, height, cls]) => rect(profileLayer, 132, top, right - 132, height, "bar " + cls));

const candleLayer = document.getElementById("candles");
weeks.forEach((week, i) => {
  const cls = week[0] === "R" ? "rise" : "fall";
  const [high, low, top, bottom] = week.slice(1).split(",").map(Number);
  const x = 135.5 + i * 5.198;
  const volume = volumes[i] || 1;
  rect(candleLayer, x - 0.5, high, 1, low - high, "wick " + cls);
  rect(candleLayer, x - 2, top, 4, Math.max(bottom - top, 1), cls);
  rect(candleLayer, x - 2.3, 533 - volume, 4.6, volume, cls);
});
```
